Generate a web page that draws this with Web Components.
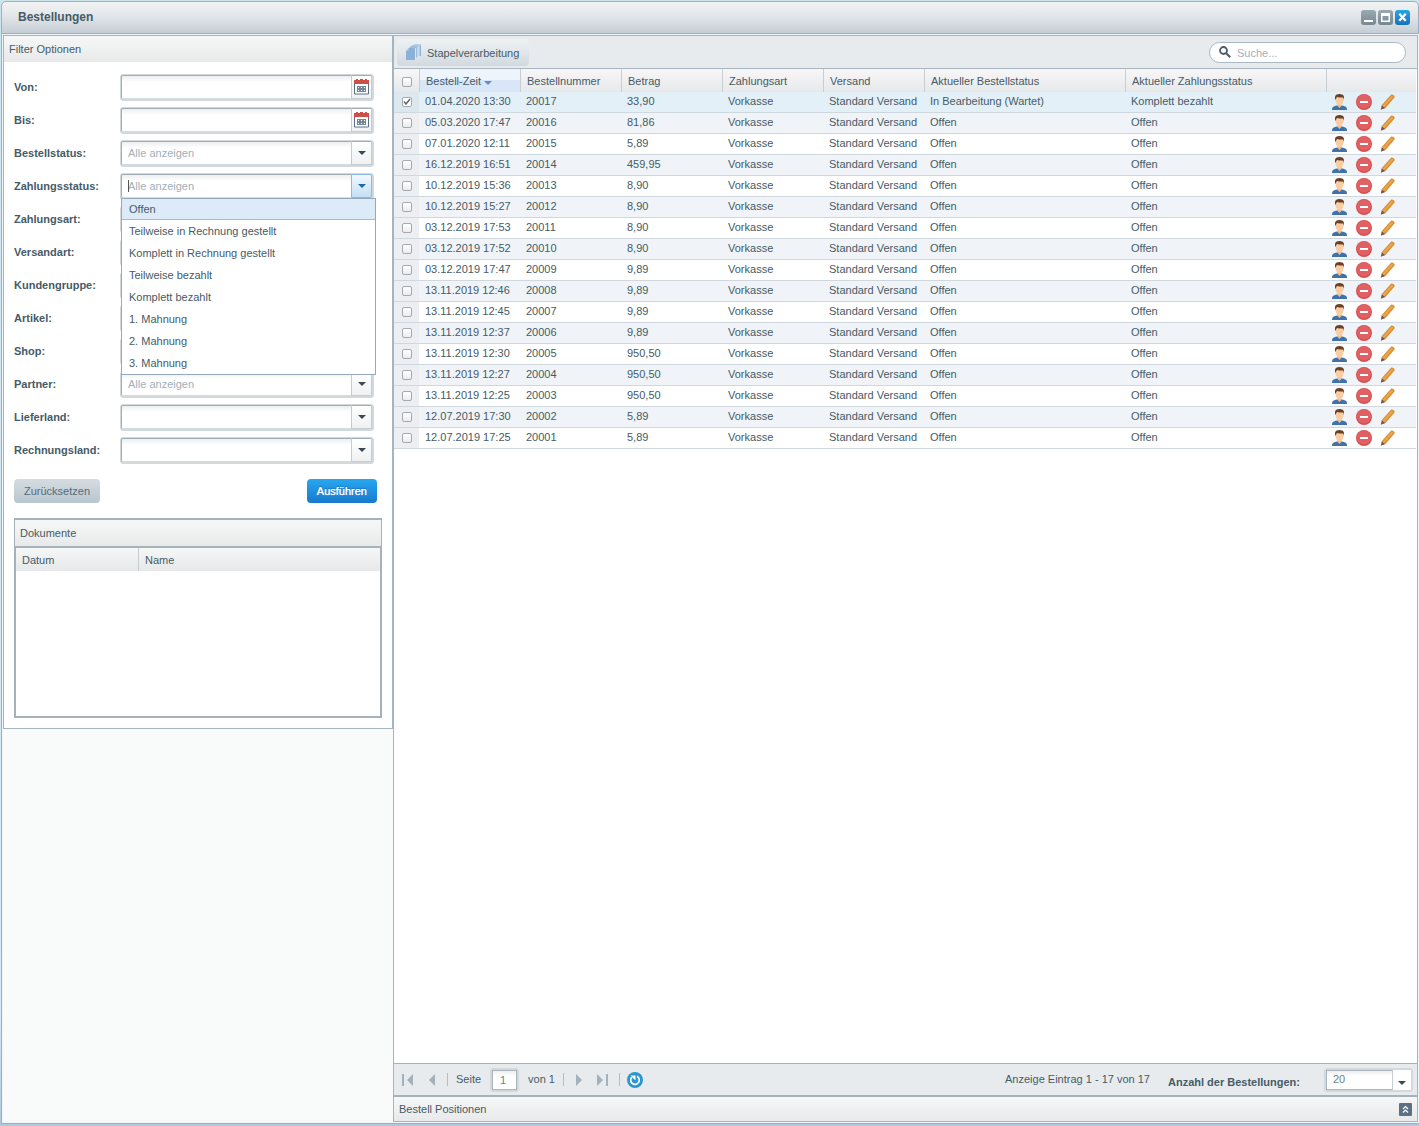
<!DOCTYPE html>
<html lang="de">
<head>
<meta charset="utf-8">
<title>Bestellungen</title>
<style>
html,body{height:100%}
body{margin:0;background:#cfe3ee;font:11px/13px "Liberation Sans",Arial,sans-serif;color:#465b66;--line:#a4b4c0}
</style>
</head>
<body>
<order-window heading="Bestellungen">
  <filter-panel slot="side" heading="Filter Optionen">
    <filter-field label="Von:" kind="date"></filter-field>
    <filter-field label="Bis:" kind="date"></filter-field>
    <filter-field label="Bestellstatus:" value="Alle anzeigen"></filter-field>
    <filter-field label="Zahlungsstatus:" value="Alle anzeigen" open choices="Offen|Teilweise in Rechnung gestellt|Komplett in Rechnung gestellt|Teilweise bezahlt|Komplett bezahlt|1. Mahnung|2. Mahnung|3. Mahnung"></filter-field>
    <filter-field label="Zahlungsart:"></filter-field>
    <filter-field label="Versandart:"></filter-field>
    <filter-field label="Kundengruppe:"></filter-field>
    <filter-field label="Artikel:"></filter-field>
    <filter-field label="Shop:"></filter-field>
    <filter-field label="Partner:" value="Alle anzeigen"></filter-field>
    <filter-field label="Lieferland:"></filter-field>
    <filter-field label="Rechnungsland:"></filter-field>
    <document-list slot="documents"></document-list>
  </filter-panel>
  <order-toolbar></order-toolbar>
  <order-grid></order-grid>
  <pager-bar></pager-bar>
  <position-bar></position-bar>
</order-window>
<script>
const base = `*{box-sizing:border-box}button,input,select{font:inherit;color:inherit;margin:0}button{border:0;background:none;padding:0}svg{display:block}`;
const define = (name, render) => customElements.define(name, class extends HTMLElement {
  constructor() {
    super();
    this.attachShadow({mode: 'open'});
  }
  connectedCallback() {
    this.shadowRoot.innerHTML = '<style>' + base + '</style>' + render(this);
  }
});

define('order-window', el => `<style>
:host{display:flex;flex-direction:column;height:100vh;padding:1px 0 2px 1px;box-sizing:border-box;background:linear-gradient(#cfe5ee,#d9e8f2 90%,#b4c6d9)}
header{flex:none;display:flex;align-items:center;justify-content:space-between;height:33px;padding:0 8px 0 16px;border:1px solid #9bb0c0;border-radius:5px 5px 0 0;background:linear-gradient(#f2f3f4,#e3e6e9 45%,#c5ced5)}
h1{margin:0 0 2px;font-size:12px;line-height:16px}
nav{display:flex;gap:2px}
nav button{width:15px;height:15px}
main{flex:1;min-height:0;display:flex;padding:1px;background:#eef6fb;border:solid #9bb0c0;border-width:0 0 1px 1px}
aside{width:390px;flex:none;background:#f9fafa;border-top:1px solid var(--line)}
section{flex:1;min-width:0;display:flex;flex-direction:column;border:1px solid var(--line);background:#fff}
</style>
<header><h1>${el.getAttribute('heading')}</h1><nav>
<button aria-label="Minimieren"><svg width="15" height="15"><defs><linearGradient id="g" x2="0" y2="1"><stop stop-color="#9aa9b2"/><stop offset="1" stop-color="#768893"/></linearGradient></defs><rect width="15" height="15" rx="3" fill="url(#g)"/><path d="M3 10h9v2H3z" fill="#fff"/></svg></button>
<button aria-label="Maximieren"><svg width="15" height="15"><defs><linearGradient id="g2" x2="0" y2="1"><stop stop-color="#9aa9b2"/><stop offset="1" stop-color="#768893"/></linearGradient></defs><rect width="15" height="15" rx="3" fill="url(#g2)"/><path d="M3 3h9v9H3zM4.500 6v4.500h6V6z" fill="#fff" fill-rule="evenodd"/></svg></button>
<button aria-label="Schließen"><svg width="15" height="15"><defs><linearGradient id="g3" x2="0" y2="1"><stop stop-color="#27a5e6"/><stop offset="1" stop-color="#1673bb"/></linearGradient></defs><rect width="15" height="15" rx="3" fill="url(#g3)"/><path d="M4.300 3.800l6.400 7M10.700 3.800l-6.400 7" stroke="#fff" stroke-width="2.300"/></svg></button>
</nav></header>
<main><aside><slot name="side"></slot></aside><section><slot></slot></section></main>`);

define('filter-panel', el => `<style>
:host{display:block;background:#fff;border:1px solid var(--line);border-top:0}
h2{margin:0;height:26px;padding:0 5px;font:inherit;line-height:26px;background:linear-gradient(#f6f7f7,#e8e9ea)}
form{display:flex;flex-direction:column;gap:6px;padding:12px 18px 0 10px}
footer{display:flex;justify-content:space-between;padding:15px 15px 15px 10px}
footer button{height:24px;padding:0 10px;border-radius:4px;background:linear-gradient(#d4dce1,#b8c6ce);color:#566b78}
footer .go{background:linear-gradient(#27a8f0,#1779cb);color:#fff;text-shadow:0 0 1px #fff,0 -1px 1px #0a5ea0}
</style>
<h2>${el.getAttribute('heading')}</h2>
<form><slot></slot></form>
<footer><button type="button">Zurücksetzen</button><button type="button" class="go">Ausführen</button></footer>
<slot name="documents"></slot>`);

define('filter-field', el => {
  const date = el.getAttribute('kind') === 'date', open = el.hasAttribute('open'), value = el.getAttribute('value') || '';
  const choices = (el.getAttribute('choices') || '').split('|');
  return `<style>
:host{display:flex;align-items:center;height:27px}
label{width:106px;flex:none;font-weight:bold}
.box{position:relative;flex:1;display:flex;height:27px;padding:0 1px 1px 0;border:1px solid #d3d8db;border-radius:3px;background:#d3d8db}
.ctl{flex:1;min-width:0;height:24px;padding:0 6px;border:1px solid #a2aeb7;border-bottom-color:#d3dce2;border-right:0;border-radius:2px 0 0 2px;background:linear-gradient(#eceef0,#fff 6px);appearance:none;color:#9fb0b9;outline:0}
.trg{width:21px;height:24px;display:grid;place-items:center;border:1px solid #c3ccd3;border-top-color:#a2aeb7;background:linear-gradient(#fff,#eff1f2);border-radius:0 2px 2px 0}
:host([open]) .trg{background:linear-gradient(#f2f9fe,#c3dff3);border-color:#8dbbe0}
.caret{position:absolute;left:7px;top:6px;width:1px;height:12px;background:#555}
ul{position:absolute;z-index:5;top:24px;left:0;right:-3px;margin:0;padding:0;list-style:none;border:solid #94a9bd;border-width:0 1px 1px;background:#fff}
li{height:22px;padding:0 7px;line-height:22px}
li[aria-selected=true]{background:#dcebf7;box-shadow:inset 0 1px #94a9bd,inset 0 -1px #9fbbdc}
</style>
<label for="c">${el.getAttribute('label')}</label>
<div class="box">${date
  ? `<input class="ctl" id="c" type="text"><button type="button" class="trg" aria-label="Kalender"><svg width="15" height="16"><path d="M.5 4v11h14V4" fill="#fff" stroke="#5b7183"/><path d="M0 1h2V0h2v1h2V0h3v1h2V0h2v1h2v4H0z" fill="#cf4f47"/><g fill="none" stroke="#74889a"><rect x="3.500" y="7.500" width="2" height="2"/><rect x="6.500" y="7.500" width="2" height="2"/><rect x="9.500" y="7.500" width="2" height="2"/><rect x="3.500" y="10.500" width="2" height="2"/><rect x="6.500" y="10.500" width="2" height="2"/><rect x="9.500" y="10.500" width="2" height="2"/></g></svg></button>`
  : `<select class="ctl" id="c"><option>${value}</option></select><button type="button" class="trg" tabindex="-1" aria-label="Öffnen"><svg width="8" height="4"><path d="M0 0h8L4 4z" fill="${open ? '#1c68aa' : '#394a55'}"/></svg></button>`}
${open ? `<span class="caret"></span><ul role="listbox">${choices.map((c, i) => `<li role="option" aria-selected="${!i}">${c}</li>`).join('')}</ul>` : ''}</div>`;
});

define('document-list', () => `<style>
:host{display:block;margin:0 10px 10px;border:2px solid #a6b2ba;border-left-width:1px;border-right-width:1px;height:200px;box-sizing:border-box}
h3{margin:0;height:28px;padding:0 5px;font:inherit;line-height:26px;border-bottom:2px solid #a6b2ba;background:linear-gradient(#f6f7f7,#e8e9ea)}
div{height:168px;border:solid #a6b2ba;border-width:0 1px;background:#fff}
table{width:100%;border-collapse:separate;border-spacing:0;table-layout:fixed}
th{height:23px;padding:2px 6px 0;text-align:left;font-weight:normal;background:linear-gradient(#f6f7f7,#e6e8e9)}
th:first-child{width:122px}th+th{border-left:1px solid #c3ccd2}
</style><h3>Dokumente</h3><div><table><thead><tr><th>Datum</th><th>Name</th></tr></thead></table></div>`);

define('order-toolbar', () => `<style>
:host{display:flex;justify-content:space-between;align-items:center;height:33px;flex:none;box-sizing:border-box;padding:0 11px 0 3px;background:#e8ebee;border-bottom:1px solid #a9b6bf}
.batch{display:flex;align-items:center;gap:5px;height:27px;padding:2px 10px 0 9px;border-radius:4px;background:linear-gradient(#eff2f4,#d1dae0)}
label{display:flex;align-items:center;gap:6px;width:197px;height:21px;padding:0 9px;border:1px solid #a9b8c2;border-radius:11px;background:#fff}
label svg{flex:none}
input{flex:1;min-width:0;height:17px;border:0;padding:2px 0 0;background:none;outline:0}
input::placeholder{color:#9fb0b9;opacity:1}
</style>
<button class="batch"><svg width="16" height="18"><path d="M7 1.500L8.500 0H15v12H7z" fill="#b9cfe4"/><path d="M14 1.500h1V12h-1z" fill="#8fb0d1"/><path d="M3.500 3.500L5.500 1.500H12v12H3.500z" fill="#9fbfdd"/><path d="M11.500 2.500h1V14h-1z" fill="#dbe7f2"/><path d="M0 6.500L2.500 4H9v12H0z" fill="#8bb1d6"/><path d="M9 4h1v12.500H9z" fill="#dbe7f2"/><path d="M0 6.500h2.500V4z" fill="#c9dcee"/></svg>Stapelverarbeitung</button>
<label><svg width="12" height="12"><circle cx="4.500" cy="4.500" r="3.500" fill="none" stroke="#4d5c66" stroke-width="1.800"/><path d="M7.200 7.200l4 4" stroke="#4d5c66" stroke-width="2"/></svg><input type="text" placeholder="Suche..." aria-label="Suche"></label>`);

const orders = [
  ['01.04.2020 13:30', '33,90'], ['05.03.2020 17:47', '81,86'], ['07.01.2020 12:11', '5,89'], ['16.12.2019 16:51', '459,95'],
  ['10.12.2019 15:36', '8,90'], ['10.12.2019 15:27', '8,90'], ['03.12.2019 17:53', '8,90'], ['03.12.2019 17:52', '8,90'],
  ['03.12.2019 17:47', '9,89'], ['13.11.2019 12:46', '9,89'], ['13.11.2019 12:45', '9,89'], ['13.11.2019 12:37', '9,89'],
  ['13.11.2019 12:30', '950,50'], ['13.11.2019 12:27', '950,50'], ['13.11.2019 12:25', '950,50'], ['12.07.2019 17:30', '5,89'], ['12.07.2019 17:25', '5,89']
];
const icons = `<div class="acts">
<button aria-label="Kunde"><svg width="16" height="16"><path d="M0 16c0-3 1-3.500 5-4.500h5c4 1 5 1.500 5 4.500z" fill="#3d72ae"/><path d="M5.500 9h4v3l-2 2-2-2z" fill="#efb988"/><path d="M3.500 3h8v3c0 3.500-2.500 5.500-4 5.500S3.500 9.500 3.500 6z" fill="#f9cda4"/><path d="M3 6V3c0-2 2-3 4.500-3S12 1 12 3v3l-.8-2.500c-2.700 0-5 0-6.200-.5L3.800 5z" fill="#6b4024"/></svg></button>
<button aria-label="Löschen"><svg width="16" height="16"><circle cx="8" cy="8" r="8" fill="#d84d50"/><circle cx="8" cy="7.500" r="7" fill="#e26a6b" opacity=".7"/><path d="M4 7h8v2H4z" fill="#fff"/></svg></button>
<button aria-label="Bearbeiten"><svg width="16" height="16"><path d="M.8 15.700l1-4.700 3.700 3z" fill="#75554a"/><path d="M1.800 11L10.800.9c1.200-1.300 4.700 1 3.700 2.600L5.500 14z" fill="#d98f35"/><path d="M2.800 11.800L11.800 1.700l1.400 1L4.200 13z" fill="#eba94c"/></svg></button></div>`;
define('order-grid', () => `<style>
:host{display:block;flex:1;min-height:0;padding-right:1px;background:#fff}
table{width:100%;table-layout:fixed;border-collapse:separate;border-spacing:0}
th{height:23px;padding:1px 6px 0;text-align:left;font-weight:normal;white-space:nowrap;background:linear-gradient(#f7f7f8,#e7e8ea)}
th+th{border-left:1px solid #c6ced4}
th.sort{background:linear-gradient(#eef4fc 50%,#d8e6f8 50%)}
th.sort svg{display:inline-block;margin-left:3px}
td{height:21px;padding:3px 6px 4px;white-space:nowrap;overflow:hidden;border-bottom:1px solid #cfd8df}
tr:nth-child(even) td{background:#f0f4f8}
tr.on td{background:#e4f0f8}
tr td:first-child{background:#eceef1;padding:0 0 0 8px}
tr td:last-child{padding:0 6px}
tr.on td:first-child{background:#dde7ee}
th:first-child{padding:2px 0 0 8px}
input{display:block;width:10px;height:10px;appearance:none;border:1px solid #a3a9ae;border-radius:2px;background:linear-gradient(#fff,#ececec)}
input:checked{background:url("data:image/svg+xml,%3Csvg xmlns='http://www.w3.org/2000/svg' width='8' height='8'%3E%3Cpath d='M1 3.500l2 2.500 4-5' fill='none' stroke='%23666' stroke-width='1.500'/%3E%3C/svg%3E") #fff}
.acts{display:flex;gap:8px}
</style><table>
<colgroup><col style="width:25px"><col style="width:101px"><col style="width:101px"><col style="width:101px"><col style="width:101px"><col style="width:101px"><col style="width:201px"><col style="width:201px"><col></colgroup>
<thead><tr><th><input type="checkbox" aria-label="Alle auswählen"></th><th class="sort">Bestell-Zeit<svg width="8" height="4"><path d="M0 0h8L4 4z" fill="#5c8fc4"/></svg></th><th>Bestellnummer</th><th>Betrag</th><th>Zahlungsart</th><th>Versand</th><th>Aktueller Bestellstatus</th><th>Aktueller Zahlungsstatus</th><th></th></tr></thead>
<tbody>${orders.map(([time, sum], i) => `<tr class="${i ? '' : 'on'}"><td><input type="checkbox" aria-label="Bestellung auswählen"${i ? '' : ' checked'}></td><td>${time}</td><td>${20017 - i}</td><td>${sum}</td><td>Vorkasse</td><td>Standard Versand</td><td>${i ? 'Offen' : 'In Bearbeitung (Wartet)'}</td><td>${i ? 'Offen' : 'Komplett bezahlt'}</td><td>${icons}</td></tr>`).join('')}</tbody></table>`);

define('pager-bar', () => `<style>
:host{display:flex;align-items:center;height:32px;flex:none;box-sizing:border-box;padding:0 4px 0 7px;background:#e8ebee;border-top:1px solid #a4b2bc}
.g{display:flex;align-items:center}
i{width:1px;height:13px;background:#b3bdc4}
.nav{gap:14px;padding-right:11px}
.page{gap:9px;padding:0 8px}
.next{gap:14px;padding:0 10px 0 11px}
.box{display:flex;padding:1px;border:1px solid #d3d8db;border-radius:3px;background:#d3d8db}
.n{width:25px;height:20px;padding:0 7px;border:1px solid #a9b4bc;background:linear-gradient(#eceef0,#fff 5px);outline:0;color:#6b7f8c}
.re{margin-left:7px}
.info{margin-left:auto;padding-right:18px}
b{padding:5px 24px 0 0}
select{width:67px;height:20px;padding:0 6px;appearance:none;border:1px solid #a9b4bc;border-right-color:#c6ced4;background:linear-gradient(#eceef0,#fff 5px);color:#6b7f8c}
.trg{width:18px;display:grid;place-items:center;padding-top:6px;background:#fff}
</style>
<div class="g nav"><button aria-label="Erste Seite"><svg width="13" height="12"><path d="M1 0h2v12H1zM12 0v12L6 6z" fill="#a5b0b8"/></svg></button><button aria-label="Zurück"><svg width="8" height="12"><path d="M7 0v12L1 6z" fill="#a5b0b8"/></svg></button></div><i></i>
<div class="g page"><label for="p">Seite</label><span class="box"><input class="n" id="p" type="text" value="1"></span><span>von 1</span></div><i></i>
<div class="g next"><button aria-label="Weiter"><svg width="8" height="12"><path d="M1 0v12l6-6z" fill="#a5b0b8"/></svg></button><button aria-label="Letzte Seite"><svg width="12" height="12"><path d="M0 0v12l6-6zM9 0h2v12H9z" fill="#a5b0b8"/></svg></button></div><i></i>
<button class="re" aria-label="Aktualisieren"><svg width="16" height="16"><circle cx="8" cy="8" r="8" fill="#2996d1"/><path d="M10 4.300a4.300 4.300 0 1 1-5.300 1" fill="none" stroke="#fff" stroke-width="1.700"/><path d="M3.500 3.500h5v5L6.700 6.700z" fill="#fff"/></svg></button>
<span class="info">Anzeige Eintrag 1 - 17 von 17</span><b><label for="s">Anzahl der Bestellungen:</label></b>
<span class="box"><select id="s"><option>20</option></select><button class="trg" tabindex="-1" aria-label="Öffnen"><svg width="8" height="4"><path d="M0 0h8L4 4z" fill="#394a55"/></svg></button></span>`);

define('position-bar', () => `<style>
:host{display:flex;align-items:center;justify-content:space-between;height:26px;flex:none;box-sizing:border-box;padding:0 5px;border-top:2px solid #a4b2bc;background:linear-gradient(#f6f7f7,#e8e9ea)}
</style><span>Bestell Positionen</span><button aria-label="Aufklappen"><svg width="13" height="13"><rect width="13" height="13" rx="1" fill="#5c7282"/><path d="M4 6l2.500-2.500L9 6M4 9.500L6.500 7 9 9.500" fill="none" stroke="#fff" stroke-width="1.200"/></svg></button>`);
</script>
</body>
</html>
